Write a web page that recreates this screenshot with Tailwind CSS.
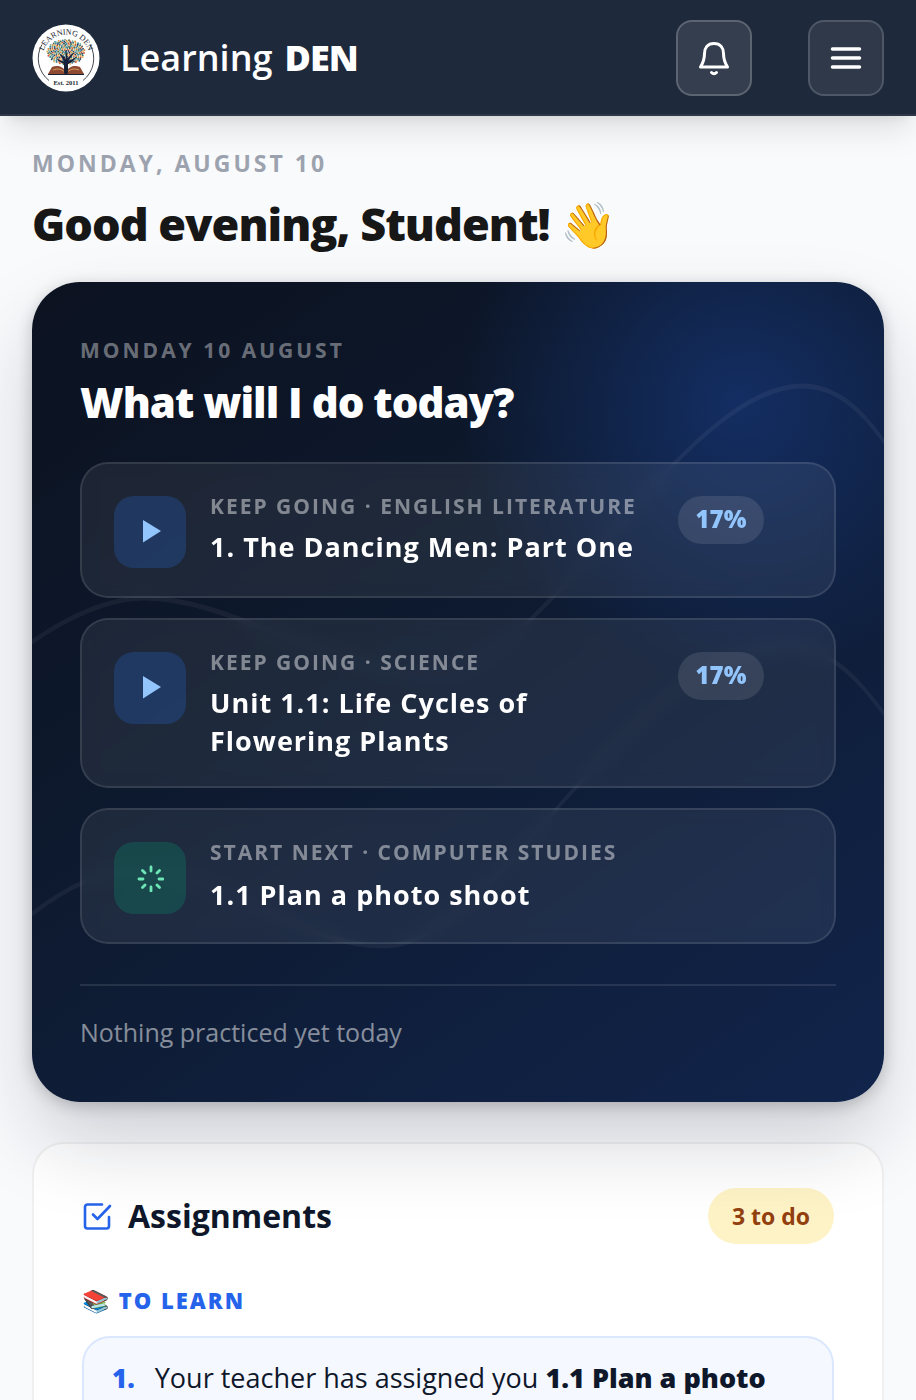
<!DOCTYPE html>
<html lang="en">
<head>
    <meta charset="UTF-8">
    <meta name="viewport" content="width=device-width, initial-scale=1.0">
    <title>Learning DEN</title>
    <script src="https://cdn.jsdelivr.net/npm/@tailwindcss/browser@4"></script>
</head>
<body class="min-h-screen overflow-x-hidden bg-[#f9fafc] font-['Open_Sans',sans-serif] text-[#0f172a]">

<!-- Top bar -->
<header class="relative z-20 flex items-center justify-between border-b-2 border-[#2d3748] bg-[#1e293b] px-8 pt-5 pb-[18px] shadow-[0_20px_30px_-6px_rgba(0,0,0,0.1),0_8px_12px_-8px_rgba(0,0,0,0.1)]">
    <a href="#" class="flex items-center gap-5 text-4xl text-white">
        <svg class="size-17 shrink-0" viewBox="0 0 68 68" aria-hidden="true">
            <defs>
                <path id="logo-arc" d="M10.500 34A23.500 23.500 0 0 1 57.500 34"/>
            </defs>
            <circle cx="34" cy="34" r="33.500" fill="#fff"/>
            <path d="M10 20.500a28 28 0 0 0 7 36M58 20.500a28 28 0 0 1-7 36" fill="none" stroke="#30343c" stroke-width=".9"/>
            <text font-family="Liberation Serif, serif" font-size="8" fill="#20242c" text-anchor="middle"><textPath href="#logo-arc" startOffset="50%">LEARNING DEN</textPath></text>
            <g id="logo-leaves"></g>
            <path d="M31.500 50c2-4 1.500-8 .5-10-3-1-6-3-8-6 3 2 5 3 8 3.500-1-3-3-6-5-8 3 1 5 3 6.500 6 .5-3 .5-6 0-9 1.500 2 2 5 2 8 2-2 4-5 7-6-2 3-4 5-6 8 3-.5 5-2 8-4-2 4-5 6-8.500 7.500-.5 3 0 6 2 10z" fill="#17203a"/>
            <path d="M20 43c5-2 11-1 14 5 3-6 9-7 14-5l4 7H16z" fill="#8f4a32"/>
            <path d="M21 46c5-2 10-1 13 4 3-5 8-6 13-4" fill="none" stroke="#d7a062" stroke-width="1"/>
            <path d="M32 40h4v9l-2 2-2-2zM16 50h36v1H16z" fill="#1b2135"/>
            <text x="34" y="61" font-family="Liberation Serif, serif" font-size="6.500" font-weight="bold" fill="#20242c" text-anchor="middle">Est. 2011</text>
        </svg>
        <span class="flex gap-3 font-semibold">Learning <strong class="font-extrabold tracking-tight">DEN</strong></span>
    </a>
    <div class="flex gap-14">
        <button type="button" aria-label="Notifications" class="flex size-19 items-center justify-center rounded-2xl border-2 border-white/20 bg-white/10 text-white">
            <svg class="size-9" viewBox="0 0 36 36" fill="none" stroke="currentColor" stroke-width="3" stroke-linecap="round" stroke-linejoin="round" aria-hidden="true">
                <path d="M18 3.500c-6.500 0-9.500 4.500-9.500 10 0 6-1.500 9.500-4 13.500h27c-2.500-4-4-7.500-4-13.500 0-5.500-3-10-9.500-10zM15.500 32.500c1.500 1.500 3.500 1.500 5 0"/>
            </svg>
        </button>
        <button type="button" aria-label="Menu" class="flex size-19 items-center justify-center rounded-2xl border-2 border-white/15 bg-white/8 text-white">
            <svg class="size-9" viewBox="0 0 36 36" fill="none" stroke="currentColor" stroke-width="3.500" stroke-linecap="round" aria-hidden="true">
                <path d="M4.500 9h27M4.500 18h27M4.500 27h27"/>
            </svg>
        </button>
    </div>
</header>

<main class="px-8 pt-8">
    <p class="text-[23px] leading-[30px] font-bold tracking-[3px] text-[#9ca3af] uppercase">Monday, August 10</p>
    <h1 class="mt-4 text-[45px] leading-[60px] font-extrabold tracking-[-1px] text-[#171717]">Good evening, Student! 👋</h1>

    <!-- Today -->
    <section class="relative z-10 mt-7 overflow-hidden rounded-[48px] bg-[radial-gradient(circle_280px_at_calc(100%_-_146px)_118px,rgba(37,99,235,0.28),transparent),linear-gradient(145deg,#0c1220,#0d192d_40%,#11244b)] p-12 shadow-[0_4px_16px_rgba(0,0,0,0.2),0_40px_80px_rgba(15,23,42,0.18)]">
        <svg class="absolute inset-0 size-full" viewBox="0 0 426 205" preserveAspectRatio="none" fill="none" stroke="#fff" stroke-opacity=".05" stroke-width="1.300" aria-hidden="true">
            <path d="M0 90C20 83 40 79 56 79C100 79 150 98 201 98C255 98 325 26 385 26C402 26 415 32 426 40"/>
            <path d="M0 158C18 151 35 147 52 147C95 147 130 166 177 166C230 166 300 91 377 91C398 91 413 99 426 108"/>
        </svg>
        <div class="relative">
            <p class="pt-1 text-[21px] leading-8 font-bold tracking-[3px] text-white/40 uppercase">Monday 10 August</p>
            <h2 class="mt-2 text-[42px] leading-[56px] font-extrabold tracking-[-1px] text-white">What will I do today?</h2>

            <div class="mt-8 flex flex-col gap-5">
                <a href="#" class="flex min-h-[136px] items-start gap-6 rounded-[28px] border-2 border-white/10 bg-white/7 px-8 pt-8 pb-[26px] backdrop-blur-sm">
                    <span class="flex size-18 shrink-0 items-center justify-center rounded-[20px] bg-blue-500/20">
                        <svg class="size-7" viewBox="0 0 28 28" fill="#93c5fd" aria-hidden="true"><path d="M7 2v22.500L25 13z"/></svg>
                    </span>
                    <span class="flex-1">
                        <span class="block text-[21px] leading-5 font-bold tracking-[2px] whitespace-nowrap text-white/45 uppercase">Keep going · English Literature</span>
                        <span class="mt-3 block text-[27px] leading-[38px] font-bold tracking-[1px] whitespace-nowrap text-white">1. The Dancing Men: Part One</span>
                    </span>
                    <span class="mr-[38px] flex h-12 w-[86px] items-center justify-center rounded-full bg-white/10 pb-[2px] text-2xl font-extrabold text-[#93c5fd]">17%</span>
                </a>
                <a href="#" class="flex min-h-[136px] items-start gap-6 rounded-[28px] border-2 border-white/10 bg-white/7 px-8 pt-8 pb-[26px] backdrop-blur-sm">
                    <span class="flex size-18 shrink-0 items-center justify-center rounded-[20px] bg-blue-500/20">
                        <svg class="size-7" viewBox="0 0 28 28" fill="#93c5fd" aria-hidden="true"><path d="M7 2v22.500L25 13z"/></svg>
                    </span>
                    <span class="flex-1">
                        <span class="block text-[21px] leading-5 font-bold tracking-[2px] whitespace-nowrap text-white/45 uppercase">Keep going · Science</span>
                        <span class="mt-3 block text-[27px] leading-[38px] font-bold tracking-[1px] text-white">Unit 1.1: Life Cycles of<br>Flowering Plants</span>
                    </span>
                    <span class="mr-[38px] flex h-12 w-[86px] items-center justify-center rounded-full bg-white/10 pb-[2px] text-2xl font-extrabold text-[#93c5fd]">17%</span>
                </a>
                <a href="#" class="flex min-h-[136px] items-start gap-6 rounded-[28px] border-2 border-white/10 bg-white/7 px-8 pt-8 pb-[26px] backdrop-blur-sm">
                    <span class="flex size-18 shrink-0 items-center justify-center rounded-[20px] bg-emerald-500/20">
                        <svg class="size-7" viewBox="0 0 28 28" fill="none" stroke="#6ee7b7" stroke-width="2.800" stroke-linecap="round" aria-hidden="true">
                            <path d="M15 3v4M15 23v4M3 15h4M23 15h4M6.500 6.500l2.500 2.500M21 21l2.500 2.500M6.500 23.500l2.500-2.500M21 9l2.500-2.500"/>
                        </svg>
                    </span>
                    <span class="flex-1">
                        <span class="block text-[21px] leading-5 font-bold tracking-[2px] whitespace-nowrap text-white/45 uppercase">Start next · Computer Studies</span>
                        <span class="mt-[14px] block text-[27px] leading-[38px] font-bold tracking-[1px] text-white">1.1 Plan a photo shoot</span>
                    </span>
                </a>
            </div>

            <p class="mt-10 border-t-2 border-white/10 pt-7 pb-1 text-[25px] leading-9 text-white/50">Nothing practiced yet today</p>
        </div>
    </section>

    <!-- Assignments -->
    <section class="mt-10 rounded-[32px] border-2 border-black/6 bg-white px-12 pt-11 pb-12">
        <div class="flex items-center justify-between">
            <h2 class="flex items-center gap-4 text-[32px] leading-10 font-bold">
                <svg class="size-[30px]" viewBox="0 0 30 30" fill="none" stroke="#2563eb" stroke-width="2.600" stroke-linecap="round" stroke-linejoin="round" aria-hidden="true">
                    <path d="M20 3.500H5.500a2.500 2.500 0 0 0-2.500 2.500v19a2.500 2.500 0 0 0 2.500 2.500h19a2.500 2.500 0 0 0 2.500-2.500V16M11 13.500l4.500 4.500L28 5"/>
                </svg>
                Assignments
            </h2>
            <span class="flex h-14 items-center rounded-full bg-[#fef3c7] px-6 text-[23px] font-bold text-[#92400e]">3 to do</span>
        </div>
        <h3 class="mt-10 text-[22px] leading-8 font-extrabold tracking-[2px] text-[#2563eb] uppercase">📚 To learn</h3>
        <ol class="mt-5 rounded-[28px] border-2 border-[#dbe7fe] bg-[#f5f8ff] px-7 pt-5 pb-6">
            <li class="flex gap-5 text-[27px] leading-10">
                <span class="text-[26px] font-extrabold text-[#2563eb]">1.</span>
                <span>Your teacher has assigned you <strong class="font-extrabold">1.1 Plan a photo shoot</strong></span>
            </li>
        </ol>
    </section>
</main>

<script>
    // Leaves of the logo tree
    const leaves = document.getElementById("logo-leaves");
    const colours = ["#2f6f78", "#d98a3d", "#26415e", "#7fae9a", "#c9583f", "#3c8aa0", "#e0b455", "#4d6b4a"];
    for (let i = 0; i < 220; i++) {
        const r = Math.sqrt(i / 220);
        const a = i * 2.4;
        const leaf = document.createElementNS("http://www.w3.org/2000/svg", "circle");
        leaf.setAttribute("cx", 34 + Math.cos(a) * r * 19);
        leaf.setAttribute("cy", 28 + Math.sin(a) * r * 12.5);
        leaf.setAttribute("r", 0.95);
        leaf.setAttribute("fill", colours[(i * 5 + (i >> 2)) % 8]);
        leaves.appendChild(leaf);
    }
</script>
</body>
</html>
